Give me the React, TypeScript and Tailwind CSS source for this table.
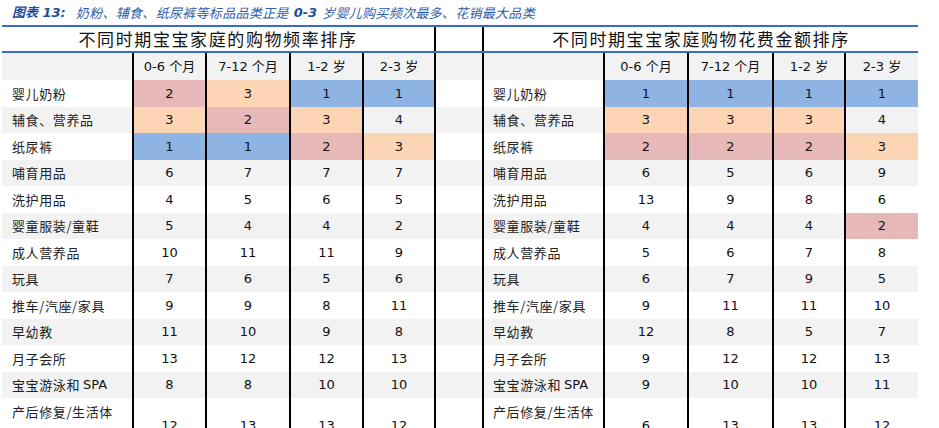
import React from "react";

type C = "p" | "o" | "b" | "";
type Cell = [string, C];

const rows: { label: string; left: Cell[]; right: Cell[] }[] = [
  { label: "婴儿奶粉", left: [["2", "p"], ["3", "o"], ["1", "b"], ["1", "b"]], right: [["1", "b"], ["1", "b"], ["1", "b"], ["1", "b"]] },
  { label: "辅食、营养品", left: [["3", "o"], ["2", "p"], ["3", "o"], ["4", ""]], right: [["3", "o"], ["3", "o"], ["3", "o"], ["4", ""]] },
  { label: "纸尿裤", left: [["1", "b"], ["1", "b"], ["2", "p"], ["3", "o"]], right: [["2", "p"], ["2", "p"], ["2", "p"], ["3", "o"]] },
  { label: "哺育用品", left: [["6", ""], ["7", ""], ["7", ""], ["7", ""]], right: [["6", ""], ["5", ""], ["6", ""], ["9", ""]] },
  { label: "洗护用品", left: [["4", ""], ["5", ""], ["6", ""], ["5", ""]], right: [["13", ""], ["9", ""], ["8", ""], ["6", ""]] },
  { label: "婴童服装/童鞋", left: [["5", ""], ["4", ""], ["4", ""], ["2", ""]], right: [["4", ""], ["4", ""], ["4", ""], ["2", "p"]] },
  { label: "成人营养品", left: [["10", ""], ["11", ""], ["11", ""], ["9", ""]], right: [["5", ""], ["6", ""], ["7", ""], ["8", ""]] },
  { label: "玩具", left: [["7", ""], ["6", ""], ["5", ""], ["6", ""]], right: [["6", ""], ["7", ""], ["9", ""], ["5", ""]] },
  { label: "推车/汽座/家具", left: [["9", ""], ["9", ""], ["8", ""], ["11", ""]], right: [["9", ""], ["11", ""], ["11", ""], ["10", ""]] },
  { label: "早幼教", left: [["11", ""], ["10", ""], ["9", ""], ["8", ""]], right: [["12", ""], ["8", ""], ["5", ""], ["7", ""]] },
  { label: "月子会所", left: [["13", ""], ["12", ""], ["12", ""], ["13", ""]], right: [["9", ""], ["12", ""], ["12", ""], ["13", ""]] },
  { label: "宝宝游泳和 SPA", left: [["8", ""], ["8", ""], ["10", ""], ["10", ""]], right: [["9", ""], ["10", ""], ["10", ""], ["11", ""]] },
];

const last = {
  left: ["12", "13", "13", "12"],
  right: ["6", "13", "13", "12"],
};

const leftW = ["w-[73px]", "w-[84px]", "w-[73px]", "w-[72px]"];
const rightW = ["w-[84px]", "w-[85px]", "w-[72px]", "w-[74px]"];

const bgOf = (c: C) =>
  c === "p" ? "bg-[#e6b8b7]" : c === "o" ? "bg-[#fcd5b4]" : c === "b" ? "bg-[#8db4e2]" : "";

const num = "font-['DejaVu_Sans','Noto_Sans_CJK_SC',sans-serif] text-[13px] text-[#111] tracking-normal";
const cjk = "font-['Noto_Sans_CJK_SC',sans-serif] text-[13px] text-[#222] tracking-[0.6px]";

function ValCell({ v, c, w }: { v: string; c: C; w: string }) {
  return (
    <div className={`${w} h-full border-l-2 border-black flex items-center justify-center ${bgOf(c)} ${num}`}>
      {v}
    </div>
  );
}

function Label({ text }: { text: string }) {
  if (text.includes("SPA")) {
    return (
      <>
        宝宝游泳和 <span className={`ml-[3px] ${num}`}>SPA</span>
      </>
    );
  }
  return <>{text}</>;
}

export default function App() {
  const headers = ["0-6 个月", "7-12 个月", "1-2 岁", "2-3 岁"];
  return (
    <div className="w-[939px] h-[428px] bg-white overflow-hidden">
      <div className="h-[25px] pl-[12px] flex items-center italic text-[13px] text-[#2f5eae] font-['Noto_Sans_CJK_SC',sans-serif]">
        <span className="font-bold font-['DejaVu_Sans','Noto_Sans_CJK_SC',sans-serif] text-[13px] text-[#1f4e9c]">图表 13:</span>
        <span className="ml-[10px] tracking-[0.3px]">奶粉、辅食、纸尿裤等标品品类正是</span>
        <span className="mx-[5px] font-bold font-['DejaVu_Sans',sans-serif] text-[13px] text-[#1f4e9c]">0-3</span>
        <span className="tracking-[0.3px]">岁婴儿购买频次最多、花销最大品类</span>
      </div>
      <div className="ml-[2px] w-[916px]">
        <div className="h-[2px] bg-[#3b6cc0]" />
        <div className="h-[24px] flex bg-white">
          <div className="w-[432px] h-full flex items-center justify-center text-[17px] tracking-[1.6px] text-[#111] font-['Noto_Sans_CJK_SC',sans-serif]">
            不同时期宝宝家庭的购物频率排序
          </div>
          <div className="w-[48px] h-full border-l-2 border-black" />
          <div className="w-[436px] h-full border-l-2 border-black flex items-center justify-center text-[17px] tracking-[1.6px] text-[#111] font-['Noto_Sans_CJK_SC',sans-serif]">
            不同时期宝宝家庭购物花费金额排序
          </div>
        </div>
        <div className="h-[2px] bg-[#3b6cc0]" />
        <div className="h-[27px] flex bg-[#f2f2f2]">
          <div className="w-[130px] h-full" />
          {headers.map((h, i) => (
            <ValCell key={"lh" + i} v={h} c="" w={leftW[i]} />
          ))}
          <div className="w-[48px] h-full border-l-2 border-black" />
          <div className="w-[121px] h-full border-l-2 border-black" />
          {headers.map((h, i) => (
            <ValCell key={"rh" + i} v={h} c="" w={rightW[i]} />
          ))}
        </div>
        {rows.map((r, ri) => (
          <div key={ri} className={`h-[26.5px] flex ${ri % 2 === 1 ? "bg-[#f2f2f2]" : "bg-white"}`}>
            <div className={`w-[130px] h-full pl-[10px] flex items-center whitespace-nowrap ${cjk}`}>
              <Label text={r.label} />
            </div>
            {r.left.map(([v, c], i) => (
              <ValCell key={"l" + i} v={v} c={c} w={leftW[i]} />
            ))}
            <div className="w-[48px] h-full border-l-2 border-black" />
            <div className={`w-[121px] h-full border-l-2 border-black pl-[9px] flex items-center whitespace-nowrap ${cjk}`}>
              <Label text={r.label} />
            </div>
            {r.right.map(([v, c], i) => (
              <ValCell key={"r" + i} v={v} c={c} w={rightW[i]} />
            ))}
          </div>
        ))}
        <div className="h-[56px] flex bg-white">
          <div className={`w-[130px] h-full pl-[10px] pt-[2px] leading-[24px] whitespace-nowrap ${cjk}`}>
            产后修复/生活体
            <br />
            验
          </div>
          {last.left.map((v, i) => (
            <ValCell key={"ll" + i} v={v} c="" w={leftW[i]} />
          ))}
          <div className="w-[48px] h-full border-l-2 border-black" />
          <div className={`w-[121px] h-full border-l-2 border-black pl-[9px] pt-[2px] leading-[24px] whitespace-nowrap ${cjk}`}>
            产后修复/生活体
            <br />
            验
          </div>
          {last.right.map((v, i) => (
            <ValCell key={"lr" + i} v={v} c="" w={rightW[i]} />
          ))}
        </div>
      </div>
    </div>
  );
}
